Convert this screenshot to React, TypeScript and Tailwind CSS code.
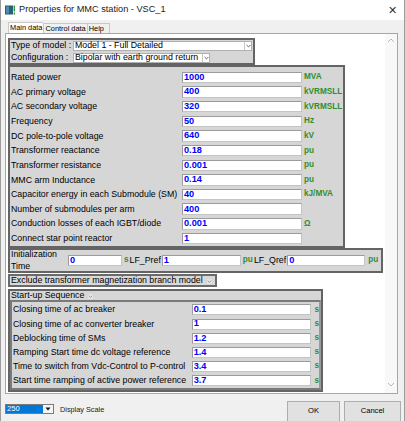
import React from "react";

const LABEL = "text-[8.8px] leading-none text-black whitespace-nowrap font-['Liberation_Sans',Arial,sans-serif]";
const VAL = "bg-white border border-[#c4c4c4] border-t-[#9c9c9c] border-l-[#9c9c9c] text-[9.2px] font-bold text-[#0000ff] leading-none pl-[1px] flex items-center font-['Liberation_Sans',Arial,sans-serif]";
const UNIT = "text-[8.2px] font-bold text-[#2f8f2f] leading-none whitespace-nowrap font-['Liberation_Sans',Arial,sans-serif]";

function SmallArrow() {
  return (
    <span className="w-[7px] h-full flex items-center justify-center border-l border-[#c8c8c8] bg-white">
      <svg width="5" height="4" viewBox="0 0 5 4">
        <path d="M0.6 1 L2.5 2.9 L4.4 1" stroke="#555" strokeWidth="0.9" fill="none" />
      </svg>
    </span>
  );
}

function TinyDrop() {
  return (
    <svg width="7" height="7" viewBox="0 0 7 7" className="ml-[3px] mt-[2px]">
      <rect x="0.5" y="0.5" width="6" height="6" rx="1" fill="#e4e4e4" stroke="#d0d0d0" strokeWidth="0.6" />
      <path d="M1.8 2.8 L3.5 4.4 L5.2 2.8" stroke="#888" strokeWidth="0.8" fill="none" />
    </svg>
  );
}

function Select({ text, width }: { text: string; width: string }) {
  return (
    <div className={`${width} h-[10px] bg-white border border-[#b0b0b0] flex items-stretch`}>
      <div className={`flex-1 pl-[1px] flex items-center ${LABEL}`}>{text}</div>
      <SmallArrow />
    </div>
  );
}

const params: [string, string, string][] = [
  ["Rated power", "1000", "MVA"],
  ["AC primary voltage", "400", "kVRMSLL"],
  ["AC secondary voltage", "320", "kVRMSLL"],
  ["Frequency", "50", "Hz"],
  ["DC pole-to-pole voltage", "640", "kV"],
  ["Transformer reactance", "0.18", "pu"],
  ["Transformer resistance", "0.001", "pu"],
  ["MMC arm Inductance", "0.14", "pu"],
  ["Capacitor energy in each Submodule (SM)", "40", "kJ/MVA"],
  ["Number of submodules per arm", "400", ""],
  ["Conduction losses of each IGBT/diode", "0.001", "Ω"],
  ["Connect star point reactor", "1", ""],
];

const startup: [string, string][] = [
  ["Closing time of ac breaker", "0.1"],
  ["Closing time of ac converter breaker", "1"],
  ["Deblocking time of SMs", "1.2"],
  ["Ramping Start time dc voltage reference", "1.4"],
  ["Time to switch from Vdc-Control to P-control", "3.4"],
  ["Start time ramping of active power reference", "3.7"],
];

function ChevUp() {
  return (
    <svg width="8" height="5" viewBox="0 0 8 5">
      <path d="M1 4 L4 1 L7 4" stroke="#b8b8b8" strokeWidth="1" fill="none" />
    </svg>
  );
}
function ChevDown() {
  return (
    <svg width="8" height="5" viewBox="0 0 8 5">
      <path d="M1 1 L4 4 L7 1" stroke="#b8b8b8" strokeWidth="1" fill="none" />
    </svg>
  );
}

export default function App() {
  return (
    <div className="w-[405px] h-[421px] overflow-hidden bg-[#f0f0f0] border-x border-[#9c9c9c] flex flex-col font-['Liberation_Sans',Arial,sans-serif]">
      {/* Title bar */}
      <div className="h-[20px] shrink-0 bg-white flex items-center pl-[4px] pr-[7px]">
        <svg width="11" height="10" viewBox="0 0 11 10">
          <rect x="0" y="0.5" width="8" height="9" fill="#2b5d78" />
          <rect x="1" y="1.5" width="3" height="7" fill="#4f8db0" />
          <rect x="8.6" y="0.5" width="1.4" height="6" fill="#2e9a3c" />
          <rect x="8.6" y="7.5" width="1.4" height="2" fill="#2e9a3c" />
        </svg>
        <span className="ml-[3px] text-[9.2px] text-[#1a1a1a]">Properties for MMC station - VSC_1</span>
        <span className="ml-auto text-[11px] text-[#333] leading-none">✕</span>
      </div>

      {/* Tabs */}
      <div className="h-[13px] shrink-0 flex items-end pl-[7px]">
        <div className="h-[11px] px-[1px] flex items-center bg-white border-l border-t border-[#c8c8c8] text-[7.4px] text-black leading-none">Main data</div>
        <div className="h-[10px] px-[1px] flex items-center border-l border-t border-[#c8c8c8] text-[7.4px] text-black leading-none">Control data</div>
        <div className="h-[10px] pl-[1px] pr-[5px] flex items-center border-x border-t border-[#c8c8c8] text-[7.4px] text-black leading-none">Help</div>
      </div>

      {/* Panel */}
      <div className="ml-[4px] w-[393px] h-[361px] shrink-0 bg-white border border-[#a6a6a6] flex">
        <div className="flex-1 flex flex-col pl-[2px] pt-[4px]">
          {/* Type of model box */}
          <div className="w-[247px] h-[27px] border-2 border-[#646464] bg-[#d6d6d6] flex flex-col justify-center gap-[2px]">
            <div className="flex items-center h-[10px]">
              <div className={`w-[63px] pl-[1px] ${LABEL}`}>Type of model :</div>
              <Select text="Model 1 - Full Detailed" width="w-[179px]" />
            </div>
            <div className="flex items-center h-[10px]">
              <div className={`w-[63px] pl-[1px] ${LABEL}`}>Configuration :</div>
              <Select text="Bipolar with earth ground return" width="w-[137px]" />
            </div>
          </div>

          {/* Parameters box */}
          <div className="w-[337px] border-2 border-[#646464] bg-[#d6d6d6] pt-[3px] flex flex-col">
            {params.map(([l, v, u]) => (
              <div key={l} className="flex items-center h-[14.67px]">
                <div className={`w-[172px] pl-[1px] ${LABEL}`}>{l}</div>
                <div className={`w-[120px] h-[11.5px] ${VAL}`}>{v}</div>
                <div className={`ml-[2px] ${UNIT}`}>{u}</div>
              </div>
            ))}
          </div>

          {/* Initialization box */}
          <div className="w-[375px] h-[25px] border-2 border-[#646464] bg-[#d6d6d6] flex items-center">
            <div className={`w-[58px] pl-[1px] flex flex-col gap-[3px] ${LABEL}`}>
              <span>Initialization</span>
              <span>Time</span>
            </div>
            <div className={`w-[54px] h-[11px] ${VAL}`}>0</div>
            <div className={`ml-[2px] ${UNIT}`}>s</div>
            <div className={`ml-[1px] ${LABEL}`}>LF_Pref</div>
            <div className={`ml-[1px] w-[79px] h-[11px] ${VAL}`}>1</div>
            <div className={`ml-[2px] ${UNIT}`}>pu</div>
            <div className={`ml-[1px] ${LABEL}`}>LF_Qref</div>
            <div className={`ml-[1px] w-[78px] h-[11px] ${VAL}`}>0</div>
            <div className={`ml-[3px] ${UNIT}`}>pu</div>
          </div>

          {/* Exclude button */}
          <div className="mt-[1px] w-[209px] h-[13px] border-2 border-[#6a6a6a] bg-[#d9d9d9] flex items-center pl-[1px]">
            <span className={LABEL}>Exclude transformer magnetization branch model</span>
            <TinyDrop />
          </div>

          {/* Start-up box */}
          <div className="mt-[2px] w-[315px] h-[103px] border-2 border-[#646464] bg-[#d6d6d6] flex flex-col">
            <div className="h-[12px] flex items-center pl-[1px]">
              <span className={LABEL}>Start-up Sequence</span>
              <TinyDrop />
            </div>
            <div className="flex-1 border-2 border-[#7a7a7a] border-r-[#9a9a9a] flex flex-col pt-[0.5px]">
              {startup.map(([l, v]) => (
                <div key={l} className="flex items-center h-[14.2px]">
                  <div className={`w-[180px] pl-[1px] ${LABEL}`}>{l}</div>
                  <div className={`w-[120px] h-[11px] ${VAL}`}>{v}</div>
                  <div className={`ml-[3px] ${UNIT}`}>s</div>
                </div>
              ))}
            </div>
          </div>
        </div>

        {/* Scrollbar */}
        <div className="w-[12px] bg-[#f8f8f8] flex flex-col items-center justify-between pt-[4px] pb-[6px]">
          <ChevUp />
          <ChevDown />
        </div>
      </div>

      {/* Bottom bar */}
      <div className="flex-1 flex items-start pl-[4px]">
        <div className="mt-[10px] w-[49px] h-[10px] bg-white border border-[#7a7a7a] flex items-stretch">
          <div className="w-[37px] bg-[#0078d7] text-white text-[7.6px] leading-none flex items-center pl-[1px]">250</div>
          <div className="flex-1 flex items-center justify-center bg-[#f4f4f4]">
            <svg width="6" height="4" viewBox="0 0 6 4">
              <path d="M0.5 0.5 L5.5 0.5 L3 3.5 Z" fill="#111" />
            </svg>
          </div>
        </div>
        <span className="mt-[12px] ml-[6px] text-[7.3px] text-[#222] leading-none">Display Scale</span>
        <div className="ml-auto mt-[7px] flex gap-[4px] pr-[3px]">
          <div className="w-[53px] h-[24px] bg-[#e1e1e1] border border-[#adadad] flex justify-center pt-[5px] text-[7.6px] text-black leading-none">OK</div>
          <div className="w-[57px] h-[24px] bg-[#e1e1e1] border border-[#adadad] flex justify-center pt-[5px] text-[7.6px] text-black leading-none">Cancel</div>
        </div>
      </div>
    </div>
  );
}
